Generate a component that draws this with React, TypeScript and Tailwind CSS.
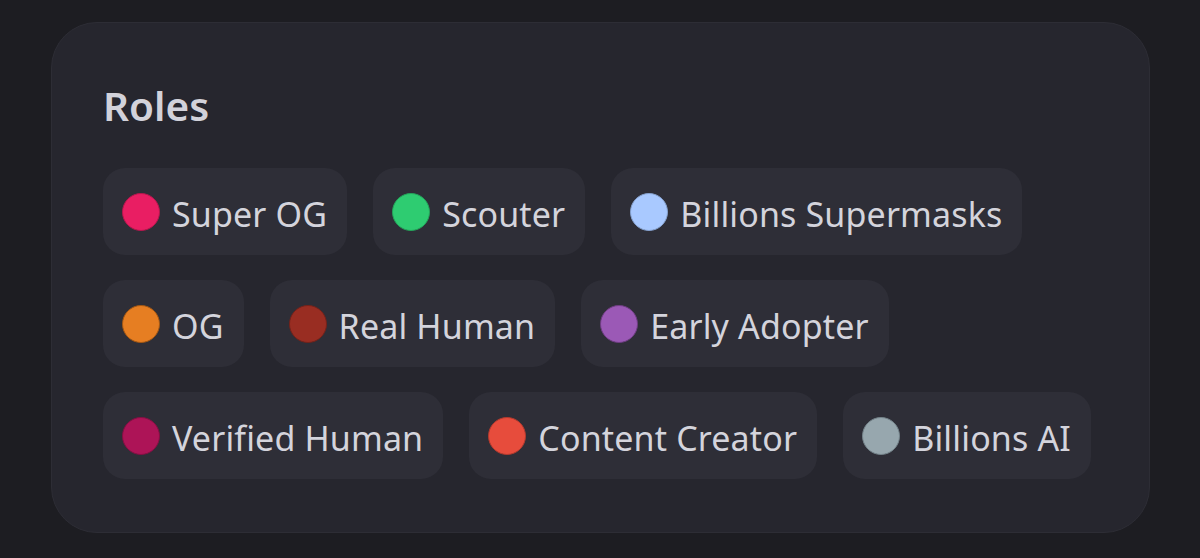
import React from "react";

const roles: { name: string; color: string; ring: string }[] = [
  { name: "Super OG", color: "bg-[#e91e63]", ring: "border-[#b5174d]" },
  { name: "Scouter", color: "bg-[#2ecc71]", ring: "border-[#24a35a]" },
  { name: "Billions Supermasks", color: "bg-[#a9c9ff]", ring: "border-[#86a2cf]" },
  { name: "OG", color: "bg-[#e67e22]", ring: "border-[#a35713]" },
  { name: "Real Human", color: "bg-[#992d22]", ring: "border-[#74221a]" },
  { name: "Early Adopter", color: "bg-[#9b59b6]", ring: "border-[#6e3d82]" },
  { name: "Verified Human", color: "bg-[#ad1457]", ring: "border-[#850f43]" },
  { name: "Content Creator", color: "bg-[#e74c3c]", ring: "border-[#b23a2e]" },
  { name: "Billions AI", color: "bg-[#97a7ae]", ring: "border-[#74838a]" },
];

export default function App() {
  return (
    <div
      className="w-[1200px] h-[558px] bg-[#1d1d22] pt-[22px] pl-[51px] pr-[50px]"
      style={{ fontFamily: '"Noto Sans", "Open Sans", sans-serif' }}
    >
      <div className="h-[511px] rounded-[46px] bg-[#26262e] border border-[#2d2d35] px-[51px] pt-[63px]">
        <h2 className="text-[40.5px] leading-[40px] font-semibold text-[#d2d2da]">Roles</h2>
        <div className="mt-[42px] flex flex-wrap gap-x-[26px] gap-y-[25px]">
          {roles.map((r) => (
            <div
              key={r.name}
              className="h-[87px] flex items-center rounded-[22px] bg-[#2e2e37] pl-[19px] pr-[20px]"
            >
              <span className={`w-[38px] h-[38px] rounded-full border ${r.color} ${r.ring}`} />
              <span className="ml-[12px] pt-[5px] text-[34px] leading-none text-[#d4d4dc] tracking-[0.15px]">
                {r.name}
              </span>
            </div>
          ))}
        </div>
      </div>
    </div>
  );
}
